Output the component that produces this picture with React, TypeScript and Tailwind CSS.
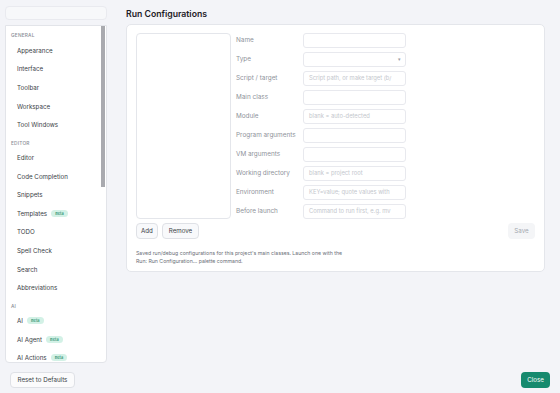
import React from 'react'

const sections: { title: string; items: { label: string; beta?: boolean }[] }[] = [
  {
    title: 'General',
    items: [
      { label: 'Appearance' },
      { label: 'Interface' },
      { label: 'Toolbar' },
      { label: 'Workspace' },
      { label: 'Tool Windows' },
    ],
  },
  {
    title: 'Editor',
    items: [
      { label: 'Editor' },
      { label: 'Code Completion' },
      { label: 'Snippets' },
      { label: 'Templates', beta: true },
      { label: 'TODO' },
      { label: 'Spell Check' },
      { label: 'Search' },
      { label: 'Abbreviations' },
    ],
  },
  {
    title: 'AI',
    items: [
      { label: 'AI', beta: true },
      { label: 'AI Agent', beta: true },
      { label: 'AI Actions', beta: true },
      { label: 'AI Models', beta: true },
    ],
  },
]

const fields: { label: string; placeholder?: string; select?: boolean }[] = [
  { label: 'Name' },
  { label: 'Type', select: true },
  { label: 'Script / target', placeholder: 'Script path, or make target (b/' },
  { label: 'Main class' },
  { label: 'Module', placeholder: 'blank = auto-detected' },
  { label: 'Program arguments' },
  { label: 'VM arguments' },
  { label: 'Working directory', placeholder: 'blank = project root' },
  { label: 'Environment', placeholder: 'KEY=value; quote values with' },
  { label: 'Before launch', placeholder: 'Command to run first, e.g. mv' },
]

function Beta() {
  return (
    <span className="ml-[4px] rounded-full bg-[#d3f1e6] px-[4px] py-[1px] text-[4px] leading-[5px] font-medium text-[#1e8a69]">
      Beta
    </span>
  )
}

export default function App() {
  return (
    <div className="flex h-[393px] w-[560px] flex-col bg-[#f3f4f8] font-['Inter',sans-serif] text-[#3a3e46]">
      <div className="flex min-h-0 flex-1">
        {/* sidebar */}
        <div className="ml-[5px] flex w-[102px] flex-col pt-[6px]">
          <div className="h-[14px] rounded-[4px] border border-[#e9eaef] bg-[#f7f8fa]" />
          <div className="relative mt-[5px] h-[338px] overflow-hidden rounded-b-[4px] border border-[#e2e4e9] bg-white pt-[5px]">
            {sections.map((s, i) => (
              <div key={s.title} className={i > 0 ? 'mt-[4px]' : ''}>
                <div className="flex h-[10px] items-center pl-[5px] text-[4.8px] font-medium uppercase tracking-[0.2px] text-[#8a8e96]">
                  {s.title}
                </div>
                {s.items.map((it) => (
                  <div key={it.label} className="flex h-[18.65px] items-center pl-[11px] text-[6.2px]">
                    {it.label}
                    {it.beta && <Beta />}
                  </div>
                ))}
              </div>
            ))}
            <div className="absolute right-[1px] top-0 h-[161px] w-[4px] bg-[#a9aaaf]" />
          </div>
        </div>

        {/* main */}
        <div className="ml-[19px] mr-[15px] flex flex-1 flex-col pt-[8px]">
          <div className="h-[12px] text-[8.7px] leading-[12px] font-semibold text-[#1d2026]">Run Configurations</div>
          <div className="mt-[4px] flex h-[248px] flex-col rounded-[5px] border border-[#e4e6eb] bg-white px-[9px] pt-[8px]">
            <div className="flex">
              <div className="h-[186px] w-[95px] rounded-[4px] border border-[#e4e6eb]" />
              <div className="ml-[5px] flex flex-col gap-[4px]">
                {fields.map((f) => (
                  <div key={f.label} className="flex h-[15px] items-center">
                    <div className="w-[67px] whitespace-nowrap text-[6.4px] text-[#8f939b]">{f.label}</div>
                    <div className="relative flex h-[15px] w-[103px] items-center overflow-hidden whitespace-nowrap rounded-[3px] border border-[#e8e9ee] bg-white pl-[5px] text-[5.8px] text-[#c4c7cd]">
                      {f.placeholder}
                      {f.select && <span className="absolute right-[4px] text-[5px] text-[#9a9ea5]">▾</span>}
                    </div>
                  </div>
                ))}
              </div>
            </div>
            <div className="mt-[4px] flex items-center">
              <div className="flex h-[16px] w-[22px] items-center justify-center rounded-[4px] border border-[#dfe1e6] bg-[#f8f9fb] text-[6.2px] leading-[8px]">
                Add
              </div>
              <div className="ml-[4px] flex h-[16px] w-[37px] items-center justify-center rounded-[4px] border border-[#dfe1e6] bg-[#f8f9fb] text-[6.2px] leading-[8px]">
                Remove
              </div>
              <div className="ml-auto flex h-[16px] w-[27px] items-center justify-center rounded-[4px] bg-[#f4f5f7] text-[6.2px] leading-[8px] text-[#a5a9b0]">
                Save
              </div>
            </div>
            <div className="mt-[10px] text-[5.2px] leading-[8px] text-[#6b7078]">
              Saved run/debug configurations for this project's main classes. Launch one with the
              <br />
              Run: Run Configuration… palette command.
            </div>
          </div>
        </div>
      </div>

      {/* footer */}
      <div className="flex h-[21px] items-start justify-between px-[10px]">
        <button className="h-[16px] w-[65px] whitespace-nowrap rounded-[4px] border border-[#dfe1e6] bg-[#fbfbfc] text-center text-[6.2px] leading-[14px]">
          Reset to Defaults
        </button>
        <button className="h-[16px] w-[29px] rounded-[4px] bg-[#168a6e] text-center text-[6.2px] leading-[16px] text-white">
          Close
        </button>
      </div>
    </div>
  )
}
